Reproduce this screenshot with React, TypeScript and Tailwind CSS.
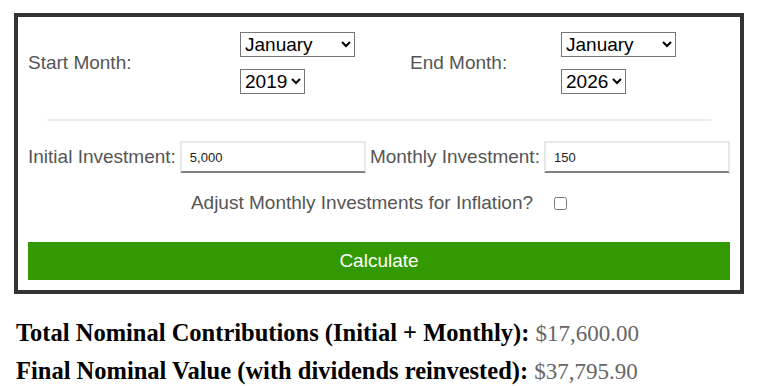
import React from 'react';

const months = ['January', 'February', 'March', 'April', 'May', 'June', 'July', 'August', 'September', 'October', 'November', 'December'];
const years = ['2019', '2020', '2021', '2022', '2023', '2024', '2025', '2026'];

const MonthYear: React.FC<{ year: string }> = ({ year }) => (
  <div className="flex flex-col items-start gap-[12px]">
    <select defaultValue="January" className="w-[115px] h-[25px] border border-[#767676] text-[19px] text-black bg-white">
      {months.map((m) => (
        <option key={m}>{m}</option>
      ))}
    </select>
    <select defaultValue={year} className="w-[65px] h-[25px] border border-[#767676] text-[19px] text-black bg-white">
      {years.map((y) => (
        <option key={y}>{y}</option>
      ))}
    </select>
  </div>
);

export default function App() {
  return (
    <div className="w-[757px] h-[386px] bg-white pt-[13px] pl-[14px] pr-[13px] font-['Liberation_Sans',Arial,sans-serif]">
      <div className="border-4 border-[#333333] p-[10px] flex flex-col">
        <div className="grid grid-cols-[212px_170px_151px_1fr] items-center pt-[5px] text-[19px] text-[#555555]">
          <span>Start Month:</span>
          <MonthYear year="2019" />
          <span>End Month:</span>
          <MonthYear year="2026" />
        </div>

        <div className="mt-[25px] mx-[19px] h-[2px] bg-[#eeeeee]" />

        <div className="mt-[20px] flex items-center gap-[4px] text-[19px] text-[#555555]">
          <span className="whitespace-nowrap">Initial Investment:</span>
          <input
            defaultValue="5,000"
            className="flex-1 min-w-0 h-[32px] px-[8px] text-[13px] text-[#222222] border-2 border-[#e6e8e8] border-b-[#808080]"
          />
          <span className="whitespace-nowrap">Monthly Investment:</span>
          <input
            defaultValue="150"
            className="flex-1 min-w-0 h-[32px] px-[8px] text-[13px] text-[#222222] border-2 border-[#e6e8e8] border-b-[#808080]"
          />
        </div>

        <div className="mt-[19px] h-[22px] flex items-center justify-center text-[19px] text-[#555555]">
          <span>Adjust Monthly Investments for Inflation?</span>
          <input type="checkbox" className="m-0 ml-[21px] w-[13px] h-[13px]" />
        </div>

        <button className="mt-[28px] h-[38px] w-full bg-[#339900] text-white text-[19px]">
          Calculate
        </button>
      </div>

      <div className="mt-[20px] pl-[2px] flex flex-col leading-[37px] font-['Liberation_Serif','Times_New_Roman',serif] text-black">
        <p className="text-[24.5px]">
          <span className="font-bold">Total Nominal Contributions (Initial + Monthly):</span>{' '}
          <span className="text-[23px] text-[#666666]">$17,600.00</span>
        </p>
        <p className="text-[24.5px]">
          <span className="font-bold">Final Nominal Value (with dividends reinvested):</span>{' '}
          <span className="text-[23px] text-[#666666]">$37,795.90</span>
        </p>
      </div>
    </div>
  );
}
